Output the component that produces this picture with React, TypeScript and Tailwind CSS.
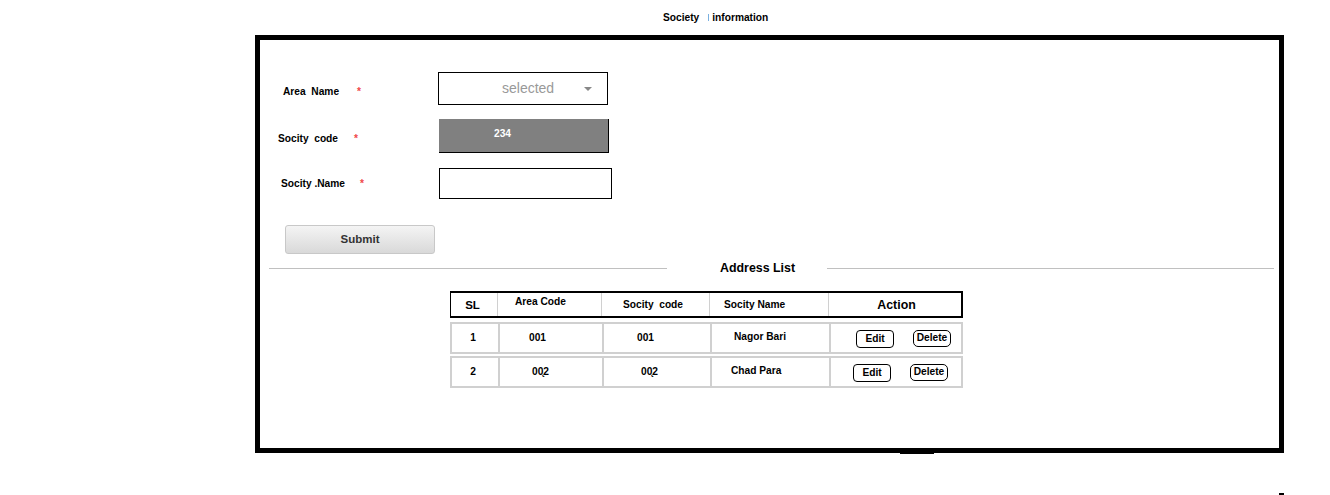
import React from 'react';

const font = "font-['Liberation_Sans',Arial,sans-serif]";

const rows = [
  { sl: '1', area: '001', code: '001', name: 'Nagor Bari', areaPl: 'pl-[29px]', codePl: 'pl-[33px]', namePl: 'pl-[22px]', editPl: 'pl-[25px]', mt: 'mt-[4px]' },
  { sl: '2', area: '00\u03282', code: '00\u03282', name: 'Chad Para', areaPl: 'pl-[32px]', codePl: 'pl-[37px]', namePl: 'pl-[19px]', editPl: 'pl-[22px]', mt: 'mt-[2px]' },
];

const App: React.FC = () => {
  return (
    <div className={`relative w-[1330px] h-[495px] bg-white text-black ${font}`}>
      {/* Page title */}
      <div className="h-[35px] pl-[663px] pt-[10px] flex items-start text-[10.2px] font-bold">
        <span>Society</span>
        <span className="ml-[9px] mt-[4px] w-px h-[7px] bg-[#7ab0e0]"></span>
        <span className="ml-[3px]">information</span>
      </div>

      {/* Main frame */}
      <div className="ml-[255px] w-[1029px] h-[418px] border-[5px] border-black">
        {/* Form */}
        <div className="pt-[32px] flex flex-col">
          <div className="flex items-center h-[33px]">
            <div className="w-[178px] pl-[23px] pt-[7px] flex items-center text-[10.2px] font-bold">
              <span className="w-[74px]">Area&nbsp; Name</span>
              <span className="text-[#f04848]">*</span>
            </div>
            <div className="relative w-[170px] h-[33px] border border-black flex items-center">
              <span className="ml-[63px] text-[14px] text-[#999]">selected</span>
              <span className="ml-[30px] w-0 h-0 border-l-[4px] border-r-[4px] border-t-[4px] border-l-transparent border-r-transparent border-t-[#888]"></span>
            </div>
          </div>

          <div className="flex items-center h-[34px] mt-[14px]">
            <div className="w-[179px] pl-[18px] pt-[5px] flex items-center text-[10.2px] font-bold">
              <span className="w-[76px]">Socity&nbsp; code</span>
              <span className="text-[#f04848]">*</span>
            </div>
            <div className="w-[170px] h-[34px] border-r border-b border-black bg-[#808080] flex items-center pb-[3px]">
              <span className="ml-[55px] text-[10.2px] font-bold text-white">234</span>
            </div>
          </div>

          <div className="flex items-center h-[31px] mt-[15px]">
            <div className="w-[179px] pl-[21px] flex items-center text-[10.2px] font-bold">
              <span className="w-[79px]">Socity .Name</span>
              <span className="text-[#f04848]">*</span>
            </div>
            <div className="w-[173px] h-[31px] border border-black"></div>
          </div>

          <div className="pl-[25px] mt-[26px]">
            <button className="w-[150px] h-[29px] rounded-[3px] border border-[#c8c8c8] bg-gradient-to-b from-[#f4f4f4] to-[#d9d9d9] text-[11.5px] font-bold text-[#333]">
              Submit
            </button>
          </div>
        </div>

        {/* Divider with title */}
        <div className="mt-[6px] pl-[9px] pr-[5px] flex items-center h-[16px]">
          <div className="w-[398px] h-px bg-[#c0c0c0]"></div>
          <span className="ml-[53px] text-[12.4px] font-bold">Address List</span>
          <div className="ml-[32px] flex-1 h-px bg-[#c0c0c0]"></div>
        </div>

        {/* Table */}
        <div className="ml-[190px] mt-[15px] w-[513px] text-[10.2px] font-bold">
          <div className="grid grid-cols-[46px_104px_108px_119px_136px] h-[27px] border-t-2 border-l border-b-2 border-r-2 border-black">
            <div className="flex items-center justify-center text-[11.5px] pt-[3px] pr-[3px]">SL</div>
            <div className="border-l border-[#d0d0d0] pl-[17px] pb-[5px] flex items-center">Area Code</div>
            <div className="border-l border-[#d0d0d0] pl-[21px] flex items-center">Socity&nbsp; code</div>
            <div className="border-l border-[#d0d0d0] pl-[14px] flex items-center">Socity Name</div>
            <div className="border-l border-[#d0d0d0] flex items-center justify-center text-[12.4px] pt-[1px]">Action</div>
          </div>

          {rows.map((r) => (
            <div
              key={r.sl}
              className={`grid grid-cols-[46px_104px_108px_119px_136px] h-[32px] border-2 border-[#d0d0d0] ${r.mt}`}
            >
              <div className="flex items-center justify-center pr-[4px]">{r.sl}</div>
              <div className={`border-l-2 border-[#d0d0d0] flex items-center ${r.areaPl}`}>{r.area}</div>
              <div className={`border-l-2 border-[#d0d0d0] flex items-center ${r.codePl}`}>{r.code}</div>
              <div className={`border-l-2 border-[#d0d0d0] flex items-center pb-[2px] ${r.namePl}`}>{r.name}</div>
              <div className={`border-l-2 border-[#d0d0d0] flex items-center gap-[19px] ${r.editPl}`}>
                <span className="w-[38px] h-[18px] mt-[2px] rounded-[4px] border border-black flex items-center justify-center">Edit</span>
                <span className="w-[38px] h-[17px] rounded-[5px] border border-black flex items-center justify-center">Delete</span>
              </div>
            </div>
          ))}
        </div>
      </div>

      {/* stray marks */}
      <div className="absolute left-[900px] top-[453px] w-[34px] h-px bg-black"></div>
      <div className="absolute left-[1279px] top-[493px] w-[5px] h-[2px] bg-black"></div>
    </div>
  );
};

export default App;
